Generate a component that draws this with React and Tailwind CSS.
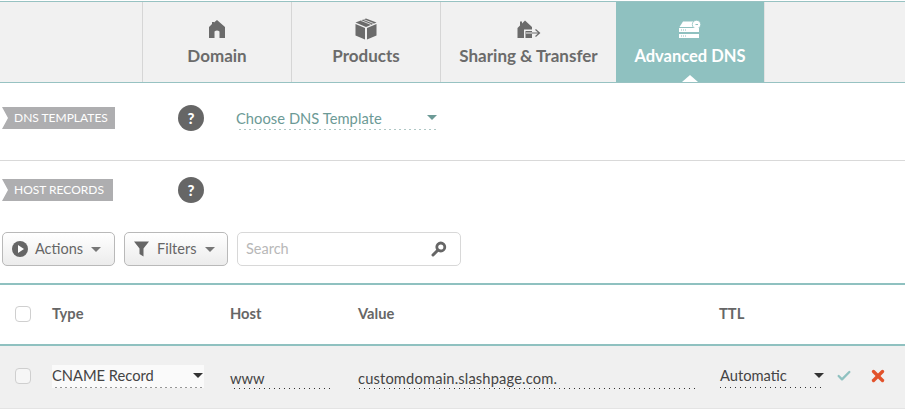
import React from "react";
import { Check, X } from "lucide-react";

// sparse dots under the editable fields
const dots = "bg-[linear-gradient(to_right,#333333_1px,transparent_1px)] bg-[length:5px_1px] bg-bottom bg-repeat-x";
const dotsTeal = "bg-[linear-gradient(to_right,#5f8f8b_1px,transparent_1px)] bg-[length:5px_1px] bg-bottom bg-repeat-x";

function HomeIcon() {
  return (
    <svg width="18" height="20" viewBox="0 0 18 20" fill="#6b6b6b">
      <path d="M1 8 L4 5 V3 H6 V3.5 L9 1 L17 8 V19 H11.5 V12.5 Q9 10.5 6.5 12.5 V19 H1 Z" />
    </svg>
  );
}

function BoxIcon() {
  return (
    <svg width="22" height="22" viewBox="0 0 22 22" fill="#6b6b6b">
      <path d="M11 0.5 L21.5 4.5 L11 9 L0.5 4.5 Z" />
      <path d="M0.5 6 L10 10 V21.5 L0.5 17.5 Z" />
      <path d="M21.5 6 L12 10 V21.5 L21.5 17.5 Z" />
      <path d="M6 2.5 L16 6.5 M8.5 1.5 L18.5 5.5" stroke="#f1f1f1" strokeWidth="0.8" />
    </svg>
  );
}

function TransferIcon() {
  return (
    <svg width="24" height="20" viewBox="0 0 24 20" fill="#6b6b6b">
      <path d="M0.5 9 L3 6.5 V2.5 H5 V4.5 L8 1.5 L15 8 V10.5 H7 V19 H0.5 Z" />
      <path d="M8.5 12 H15 V13 H8.5 Z M8.5 15 H15 V19 H8.5 Z" />
      <path d="M8 14 H22.5 M18.5 10.5 L22.5 14 L18.5 17.5" fill="none" stroke="#6b6b6b" strokeWidth="1.2" />
    </svg>
  );
}

function DnsIcon() {
  return (
    <svg width="24" height="20" viewBox="0 0 24 20" fill="#ffffff">
      <path d="M5 2.5 H15 L17 8 H1.5 Z" />
      <circle cx="18.5" cy="5.5" r="4.2" stroke="#8fc1c0" strokeWidth="0.8" />
      <path d="M1 9 H21 V13 H1 Z M1 15 H21 V19 H1 Z" />
      <path d="M3 11 H9 M3 17 H9" stroke="#8fc1c0" strokeWidth="1" strokeDasharray="1 1" />
      <path d="M17.5 5.5 H20" stroke="#8fc1c0" strokeWidth="1" />
    </svg>
  );
}

function Caret({ color = "border-t-[#777777]" }) {
  return <span className={`w-0 h-0 border-x-[5px] border-x-transparent border-t-[5px] ${color}`}></span>;
}

function Tab({ icon, label, className }) {
  return (
    <div className={`flex flex-col items-center pt-[15px] border-l border-[#d6d6d6] text-[#6b6b6b] ${className}`}>
      <div className="h-[23px] flex items-center">{icon}</div>
      <span className="mt-[4px] text-[17px] leading-[24px] font-bold">{label}</span>
    </div>
  );
}

function Ribbon({ label, width }) {
  return (
    <div
      className={`h-[22px] bg-[#aeaeb0] text-white text-[12px] pl-[12px] leading-[22px] ${width}`}
      style={{ clipPath: "polygon(0 0, 100% 0, 100% 100%, 0 100%, 6px 50%)" }}
    >
      {label}
    </div>
  );
}

function Help() {
  return (
    <div className="w-[26px] h-[26px] rounded-full bg-[#666666] text-white text-[15px] font-black flex items-center justify-center">
      ?
    </div>
  );
}

function Checkbox() {
  return <div className="w-[16px] h-[16px] rounded-[4px] border border-[#cfcfcf] bg-white/40"></div>;
}

export default function App() {
  return (
    <div className="w-[905px] h-[413px] overflow-hidden bg-white pt-[1px] text-[#555555] font-['Lato','Noto_Sans',sans-serif]">
      {/* top tabs */}
      <div className="h-[82px] bg-[#f1f1f1] border-y border-[#97c2c2] flex pl-[142px]">
        <Tab icon={<HomeIcon />} label="Domain" className="w-[149px]" />
        <Tab icon={<BoxIcon />} label="Products" className="w-[149px]" />
        <Tab icon={<TransferIcon />} label="Sharing & Transfer" className="w-[176px]" />
        <div className="w-[148px] relative flex flex-col items-center pt-[15px] bg-[#8fc1c0] text-white">
          <div className="h-[23px] flex items-center"><DnsIcon /></div>
          <span className="mt-[4px] text-[16.5px] leading-[24px] font-bold">Advanced DNS</span>
          <span className="absolute bottom-0 left-[66px] w-0 h-0 border-x-[8px] border-x-transparent border-b-[7px] border-b-white"></span>
        </div>
        <div className="flex-1 border-l border-[#e2e2e2]"></div>
      </div>

      {/* dns templates */}
      <div className="h-[78px] border-b border-[#d9d9d9] flex items-start pt-[22px]">
        <Ribbon label="DNS TEMPLATES" width="w-[113px] ml-[2px] mt-[2px]" />
        <div className="ml-[63px]"><Help /></div>
        <div className={`ml-[32px] w-[202px] h-[25px] flex items-center justify-between pr-[1px] text-[#6c9a96] text-[14.7px] leading-[22px] tracking-[0.05px] ${dotsTeal}`}>
          <span>Choose DNS Template</span>
          <Caret color="border-t-[#6c9a96]" />
        </div>
      </div>

      {/* host records */}
      <div className="mt-[16px] flex items-center h-[26px]">
        <Ribbon label="HOST RECORDS" width="w-[111px] ml-[2px]" />
        <div className="ml-[65px]"><Help /></div>
      </div>

      {/* toolbar */}
      <div className="mt-[29px] flex items-center pl-[2px] text-[14.5px]">
        <div className="w-[113px] h-[34px] rounded-[5px] border border-[#b9b9b9] bg-gradient-to-b from-white to-[#ececec] flex items-center pl-[9px] text-[#666666]">
          <span className="w-[16px] h-[16px] rounded-full bg-[#666666] flex items-center justify-center">
            <span className="ml-[1px] w-0 h-0 border-y-[4px] border-y-transparent border-l-[6px] border-l-white"></span>
          </span>
          <span className="ml-[7px] mr-[8px]">Actions</span>
          <Caret />
        </div>
        <div className="ml-[9px] w-[104px] h-[34px] rounded-[5px] border border-[#b9b9b9] bg-gradient-to-b from-white to-[#ececec] flex items-center pl-[9px] text-[#666666]">
          <svg width="15" height="16" viewBox="0 0 15 16" fill="#666666">
            <path d="M0 0.5 H15 L9.5 7.5 V15.5 L5.5 13 V7.5 Z" />
          </svg>
          <span className="ml-[8px] mr-[9px]">Filters</span>
          <Caret />
        </div>
        <div className="ml-[9px] w-[224px] h-[34px] rounded-[5px] border border-[#d8d8d8] bg-white flex items-center justify-between pl-[8px] pr-[13px] text-[#b8b8b8]">
          <span>Search</span>
          <svg width="16" height="16" viewBox="0 0 16 16" fill="none" stroke="#666666">
            <circle cx="9.8" cy="6" r="4" strokeWidth="2.8" />
            <path d="M6.5 9.5 L2 14" strokeWidth="3" strokeLinecap="round" />
          </svg>
        </div>
      </div>

      {/* table head */}
      <div className="mt-[17px] h-[63px] pb-[2px] border-y-2 border-[#8fc1c0] flex items-center text-[14.7px] font-bold text-[#666666]">
        <div className="ml-[15px] w-[37px]"><Checkbox /></div>
        <div className="w-[178px]">Type</div>
        <div className="w-[128px]">Host</div>
        <div className="w-[361px]">Value</div>
        <div>TTL</div>
      </div>

      {/* record row */}
      <div className="h-[63px] bg-[#f0f0f0] border-b border-[#e4e4e4] flex items-center text-[14.7px] text-[#444444]">
        <div className="ml-[15px] w-[37px] mb-[2px]"><Checkbox /></div>
        <div className={`w-[152px] h-[23px] mb-[2px] pb-[2px] bg-[#fafafa] flex items-center justify-between pr-[1px] ${dots}`}>
          <span>CNAME Record</span>
          <Caret color="border-t-[#333333]" />
        </div>
        <div className={`ml-[26px] w-[103px] h-[23px] mt-[1px] leading-[24px] ${dots}`}>www</div>
        <div className={`ml-[25px] w-[337px] h-[23px] mt-[1px] leading-[24px] tracking-[0.15px] ${dots}`}>customdomain.slashpage.com.</div>
        <div className={`ml-[25px] w-[105px] h-[23px] mb-[2px] pb-[2px] flex items-center justify-between pr-[1px] ${dots}`}>
          <span>Automatic</span>
          <Caret color="border-t-[#333333]" />
        </div>
        <Check className="ml-[11px] mb-[2px] w-[16px] h-[16px] text-[#8fc1c0]" strokeWidth={3.5} />
        <X className="ml-[17px] mb-[2px] w-[18px] h-[18px] text-[#e2522b]" strokeWidth={4.5} />
      </div>
    </div>
  );
}
